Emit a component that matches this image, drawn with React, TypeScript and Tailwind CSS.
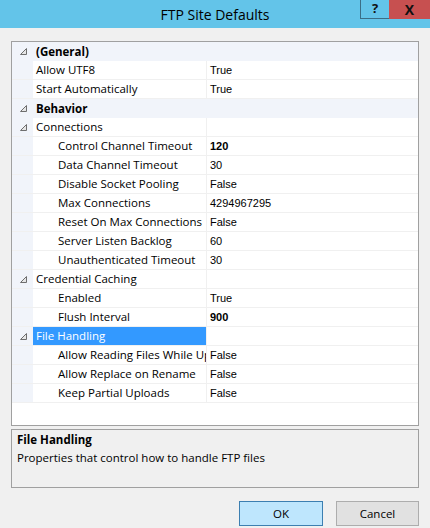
import React from 'react';

type Row =
  | { kind: 'cat'; label: string }
  | { kind: 'sub'; label: string; selected?: boolean }
  | { kind: 'prop'; label: string; value: string; depth: number; bold?: boolean };

const rows: Row[] = [
  { kind: 'cat', label: '(General)' },
  { kind: 'prop', label: 'Allow UTF8', value: 'True', depth: 0 },
  { kind: 'prop', label: 'Start Automatically', value: 'True', depth: 0 },
  { kind: 'cat', label: 'Behavior' },
  { kind: 'sub', label: 'Connections' },
  { kind: 'prop', label: 'Control Channel Timeout', value: '120', depth: 1, bold: true },
  { kind: 'prop', label: 'Data Channel Timeout', value: '30', depth: 1 },
  { kind: 'prop', label: 'Disable Socket Pooling', value: 'False', depth: 1 },
  { kind: 'prop', label: 'Max Connections', value: '4294967295', depth: 1 },
  { kind: 'prop', label: 'Reset On Max Connections', value: 'False', depth: 1 },
  { kind: 'prop', label: 'Server Listen Backlog', value: '60', depth: 1 },
  { kind: 'prop', label: 'Unauthenticated Timeout', value: '30', depth: 1 },
  { kind: 'sub', label: 'Credential Caching' },
  { kind: 'prop', label: 'Enabled', value: 'True', depth: 1 },
  { kind: 'prop', label: 'Flush Interval', value: '900', depth: 1, bold: true },
  { kind: 'sub', label: 'File Handling', selected: true },
  { kind: 'prop', label: 'Allow Reading Files While Uploading', value: 'False', depth: 1 },
  { kind: 'prop', label: 'Allow Replace on Rename', value: 'False', depth: 1 },
  { kind: 'prop', label: 'Keep Partial Uploads', value: 'False', depth: 1 },
];

const uiFont = { fontFamily: '"Open Sans", "Noto Sans", sans-serif' };
const valueFont = { fontFamily: '"Liberation Sans", Arial, sans-serif' };

// small "expanded" glyph used in the gutter
const Expander = () => (
  <svg width="7" height="7" viewBox="0 0 7 7" className="block">
    <polygon points="6.5,0.5 6.5,6.5 0.5,6.5" fill="#e6e6e6" stroke="#6e6e6e" strokeWidth="1" />
  </svg>
);

const GridRow = ({ row }: { row: Row }) => {
  if (row.kind === 'cat') {
    return (
      <div className="flex h-[19px] items-center bg-[#f1f4fa]">
        <div className="flex w-[21px] shrink-0 items-center justify-center pl-[1px]">
          <Expander />
        </div>
        <div className="pl-[3px] text-[11.5px] font-bold text-black" style={uiFont}>
          {row.label}
        </div>
      </div>
    );
  }
  if (row.kind === 'sub') {
    return (
      <div className="flex h-[19px] border-b border-[#f0f0f0]">
        <div className="flex w-[21px] shrink-0 items-center justify-center bg-[#f1f4fa] pl-[1px]">
          <Expander />
        </div>
        <div
          className={`flex w-[174px] shrink-0 items-center border-r border-[#f0f0f0] pl-[3px] text-[11.5px] ${
            row.selected ? 'bg-[#3399ff] text-white' : 'text-black'
          }`}
          style={uiFont}
        >
          {row.label}
        </div>
        <div className="flex-1" />
      </div>
    );
  }
  return (
    <div className="flex h-[19px] border-b border-[#f0f0f0]">
      <div className="w-[21px] shrink-0 bg-[#f1f4fa]" />
      <div
        className={`flex w-[174px] shrink-0 items-center overflow-hidden whitespace-nowrap border-r border-[#f0f0f0] text-[11.5px] text-black ${
          row.depth ? 'pl-[25px]' : 'pl-[3px]'
        }`}
        style={uiFont}
      >
        {row.label}
      </div>
      <div
        className={`flex flex-1 items-center pl-[3px] text-[11px] text-black ${row.bold ? 'font-bold' : ''}`}
        style={valueFont}
      >
        {row.value}
      </div>
    </div>
  );
};

export default function App() {
  return (
    <div className="flex h-[528px] w-[430px] flex-col overflow-hidden bg-[#f0f0f0]" style={uiFont}>
      {/* title bar */}
      <div className="flex h-[28px] shrink-0 bg-[#63c4e9]">
        <div className="w-[70px] shrink-0" />
        <div className="flex flex-1 items-center justify-center text-[14px] text-black">FTP Site Defaults</div>
        <div className="flex h-[19px] shrink-0">
          <div className="flex w-[29px] items-center justify-center border-b border-l border-[#3b6e86] text-[13px] font-bold text-[#111]">
            ?
          </div>
          <div className="flex w-[41px] items-center justify-center bg-[#c75050] text-[14px] font-bold text-[#111]">
            X
          </div>
        </div>
      </div>

      <div className="flex flex-1 flex-col px-[11px] pt-[13px]">
        {/* property grid */}
        <div className="h-[385px] shrink-0 overflow-hidden border border-[#a0a0a0] bg-white">
          {rows.map((row, i) => (
            <GridRow key={i} row={row} />
          ))}
        </div>

        {/* description pane */}
        <div className="mt-[3px] h-[59px] shrink-0 border border-[#a0a0a0] bg-[#f0f0f0] px-[5px] pt-[1px] text-[11.5px] leading-[18px] text-black">
          <div className="font-bold">File Handling</div>
          <div>Properties that control how to handle FTP files</div>
        </div>

        {/* buttons */}
        <div className="mt-[13px] flex justify-end gap-[13px]">
          <button className="h-[25px] w-[84px] border border-[#3c7fb1] bg-[#bee6fd] text-[11.5px] text-black">OK</button>
          <button className="h-[25px] w-[83px] border border-[#adadad] bg-[#e1e1e1] text-[11.5px] text-black">
            Cancel
          </button>
        </div>
      </div>
    </div>
  );
}
